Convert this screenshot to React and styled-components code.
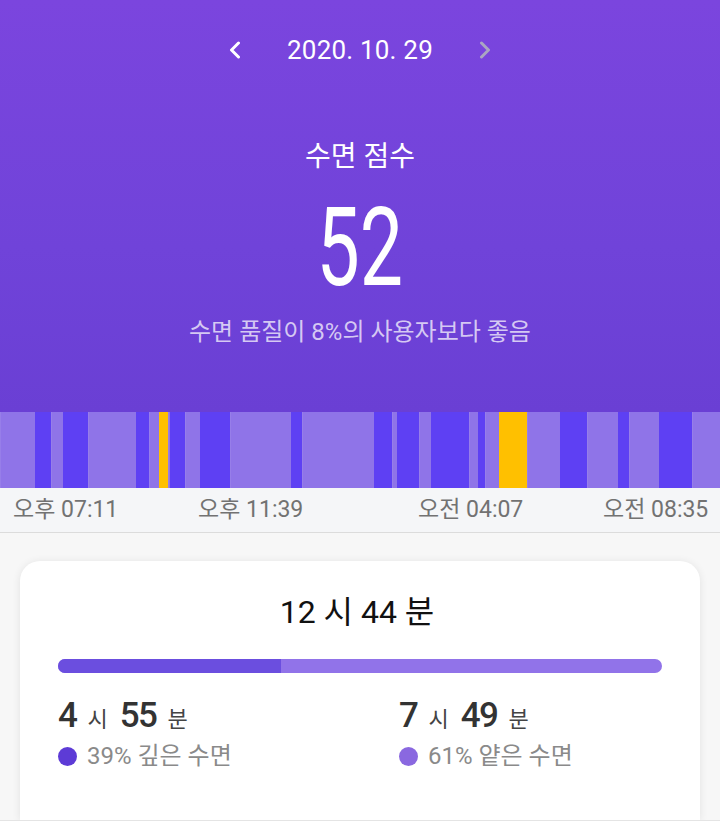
import React from "react";
import styled, { createGlobalStyle } from "styled-components";

const GlobalStyle = createGlobalStyle`
  html, body {
    margin: 0;
    padding: 0;
    background: #ffffff;
  }
  body {
    font-family: Roboto, "Noto Sans CJK KR", "Noto Sans", sans-serif;
  }
`;

const Page = styled.div`
  width: 720px;
  height: 832px;
  display: flex;
  flex-direction: column;
  overflow: hidden;
  background: #f7f7f7;
`;

const Header = styled.header`
  height: 412px;
  box-sizing: border-box;
  padding-top: 30px;
  display: flex;
  flex-direction: column;
  align-items: center;
  background: linear-gradient(180deg, #7b45de 0%, #7043d9 60%, #6a3fd4 100%);
  color: #ffffff;
`;

const DateRow = styled.div`
  height: 40px;
  display: flex;
  align-items: center;
  gap: 46px;
`;

const DateText = styled.div`
  font-size: 26px;
  line-height: 40px;
  letter-spacing: 0.2px;
`;

const Chevron = styled.svg`
  width: 12px;
  height: 18px;
  display: block;
  stroke: ${({ disabled }) => (disabled ? "#aaa6c2" : "#ffffff")};
`;

const ScoreTitle = styled.div`
  margin-top: 69px;
  font-size: 28px;
  line-height: 36px;
`;

const Score = styled.div`
  margin-top: 18px;
  font-size: 110px;
  line-height: 110px;
  font-weight: 400;
  transform: scaleX(0.7);
`;

const ScoreNote = styled.div`
  margin-top: 13px;
  font-size: 24px;
  line-height: 32px;
  color: rgba(255, 255, 255, 0.72);
`;

const SleepBar = styled.div`
  height: 76px;
  display: flex;
  background: #8f74e8;
`;

const SEGMENT_COLORS = {
  L: "#8f74e8",
  D: "#5e40f3",
  Y: "#ffc000",
};

const Segment = styled.div`
  height: 100%;
  flex: none;
  background: ${({ kind }) => SEGMENT_COLORS[kind]};
  box-shadow: ${({ kind }) =>
    kind === "L" ? "inset 1px 0 0 rgba(255,255,255,0.08)" : "none"};
`;

const TimeRow = styled.div`
  height: 44px;
  display: grid;
  grid-template-columns: 185px 220px 185px 1fr;
  align-items: center;
  padding: 0 12px 0 13px;
  background: #f5f6f8;
  border-bottom: 1px solid #dcdcdc;
`;

const TimeLabel = styled.span`
  font-size: 23px;
  line-height: 30px;
  color: #727272;
  white-space: nowrap;
  justify-self: ${({ end }) => (end ? "end" : "start")};
`;

const Content = styled.main`
  flex: 1;
  display: flex;
  flex-direction: column;
  padding: 28px 20px 0;
  background: #f7f7f7;
`;

const Card = styled.section`
  flex: 1;
  box-sizing: border-box;
  padding: 31px 38px 0;
  background: #ffffff;
  border-radius: 20px 20px 0 0;
  box-shadow: 0 1px 8px rgba(0, 0, 0, 0.09);
`;

const Total = styled.h2`
  margin: 0 0 0 -6px;
  text-align: center;
  font-size: 32px;
  line-height: 40px;
  font-weight: 400;
  color: #111111;
`;

const Ratio = styled.div`
  margin-top: 27px;
  height: 14px;
  border-radius: 7px;
  overflow: hidden;
  display: flex;
  background: #9173e9;
`;

const RatioPart = styled.div`
  height: 100%;
  background: #6b4edf;
`;

const Stats = styled.div`
  margin-top: 21px;
  display: grid;
  grid-template-columns: 341px 1fr;
`;

const Stat = styled.div`
  display: flex;
  flex-direction: column;
`;

const Duration = styled.div`
  display: flex;
  align-items: baseline;
  line-height: 44px;
  color: #333333;
`;

const Num = styled.span`
  font-size: 35px;
  font-weight: 500;
  letter-spacing: -1.5px;
`;

const Unit = styled.span`
  font-size: 22px;
  color: #444444;
  margin: 0 12px 0 11px;
`;

const Legend = styled.div`
  display: flex;
  align-items: center;
  gap: 10px;
  font-size: 24px;
  line-height: 28px;
  color: #8a8a8a;
`;

const Dot = styled.span`
  width: 19px;
  height: 19px;
  border-radius: 50%;
  background: ${({ color }) => color};
`;

const Footer = styled.footer`
  height: 11px;
  background: #ffffff;
  border-top: 1px solid #e4e4e4;
`;

const bounds = [
  ["L", 0], ["D", 35], ["L", 51], ["D", 63], ["L", 88], ["D", 136],
  ["L", 149], ["Y", 159], ["L", 168], ["D", 170], ["L", 185], ["D", 200],
  ["L", 230], ["D", 291], ["L", 302], ["D", 374], ["L", 392], ["D", 397],
  ["L", 419], ["D", 431], ["L", 469], ["D", 478], ["L", 485], ["Y", 499],
  ["L", 527], ["D", 560], ["L", 587], ["D", 618], ["L", 629], ["D", 659],
  ["L", 692],
];

const segments = bounds.map(([kind, start], i) => ({
  kind,
  width: (i < bounds.length - 1 ? bounds[i + 1][1] : 720) - start,
}));

const ChevronIcon = ({ dir, disabled }) => (
  <Chevron viewBox="0 0 12 18" fill="none" strokeWidth="3" disabled={disabled}>
    {dir === "left" ? (
      <polyline points="9.5,2 2.5,9 9.5,16" strokeLinecap="round" strokeLinejoin="round" />
    ) : (
      <polyline points="2.5,2 9.5,9 2.5,16" strokeLinecap="round" strokeLinejoin="round" />
    )}
  </Chevron>
);

const App = () => {
  return (
    <Page>
      <GlobalStyle />
      <Header>
        <DateRow>
          <ChevronIcon dir="left" />
          <DateText>2020. 10. 29</DateText>
          <ChevronIcon dir="right" disabled />
        </DateRow>
        <ScoreTitle>수면 점수</ScoreTitle>
        <Score>52</Score>
        <ScoreNote>수면 품질이 8%의 사용자보다 좋음</ScoreNote>
      </Header>

      <SleepBar>
        {segments.map((s, i) => (
          <Segment key={i} kind={s.kind} style={{ width: s.width }} />
        ))}
      </SleepBar>

      <TimeRow>
        <TimeLabel>오후 07:11</TimeLabel>
        <TimeLabel>오후 11:39</TimeLabel>
        <TimeLabel>오전 04:07</TimeLabel>
        <TimeLabel end>오전 08:35</TimeLabel>
      </TimeRow>

      <Content>
        <Card>
          <Total>12 시 44 분</Total>
          <Ratio>
            <RatioPart style={{ width: "37%" }} />
          </Ratio>
          <Stats>
            <Stat>
              <Duration>
                <Num>4</Num>
                <Unit>시</Unit>
                <Num>55</Num>
                <Unit>분</Unit>
              </Duration>
              <Legend>
                <Dot color="#5d3bd6" />
                39% 깊은 수면
              </Legend>
            </Stat>
            <Stat>
              <Duration>
                <Num>7</Num>
                <Unit>시</Unit>
                <Num>49</Num>
                <Unit>분</Unit>
              </Duration>
              <Legend>
                <Dot color="#8a68e0" />
                61% 얕은 수면
              </Legend>
            </Stat>
          </Stats>
        </Card>
      </Content>
      <Footer />
    </Page>
  );
};

export default App;
